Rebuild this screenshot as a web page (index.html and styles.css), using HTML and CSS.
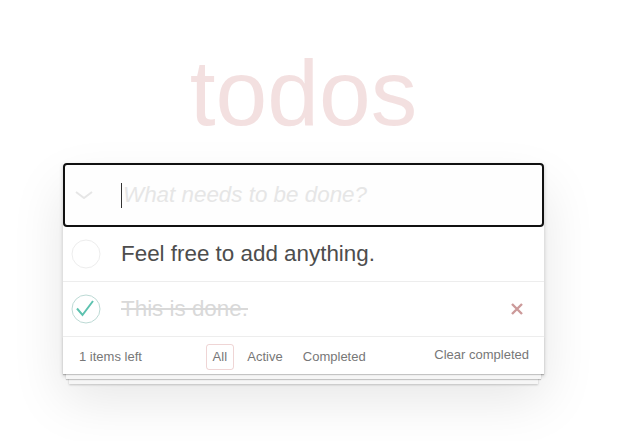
FILE: index.html
```html
<!DOCTYPE html>
<html>
<head>
<meta charset="utf-8">
<link rel="stylesheet" href="styles.css">
</head>
<body>
<section class="app">
  <h1 class="title">todos</h1>
  <div class="card">
    <div class="new-todo">
      <span class="toggle-all">
        <svg width="18" height="8" viewBox="0 0 18 8"><polyline points="1,1 9,7 17,1" fill="none" stroke="#e6e6e6" stroke-width="2"/></svg>
      </span>
      <span class="caret"></span>
      <span class="placeholder">What needs to be done?</span>
    </div>
    <ul class="list">
      <li class="item">
        <span class="toggle">
          <svg width="30" height="30" viewBox="0 0 30 30"><circle cx="15" cy="15" r="14" fill="none" stroke="#ededed" stroke-width="1"/></svg>
        </span>
        <span class="label">Feel free to add anything.</span>
      </li>
      <li class="item done">
        <span class="toggle">
          <svg width="30" height="30" viewBox="0 0 30 30"><circle cx="15" cy="15" r="14" fill="none" stroke="#bddad5" stroke-width="1"/><polyline points="6,14.5 11.5,21 22,7" fill="none" stroke="#5dc2af" stroke-width="2"/></svg>
        </span>
        <span class="label">This is done.</span>
        <span class="destroy">
          <svg width="12" height="12" viewBox="0 0 12 12"><path d="M1 1L11 11M11 1L1 11" stroke="#cc9a9a" stroke-width="2.4"/></svg>
        </span>
      </li>
    </ul>
    <footer class="footer">
      <span class="count"><strong>1</strong> items left</span>
      <ul class="filters">
        <li><a class="selected">All</a></li>
        <li><a>Active</a></li>
        <li><a>Completed</a></li>
      </ul>
      <span class="clear">Clear completed</span>
    </footer>
  </div>
</section>
</body>
</html>
```
FILE: styles.css
```css
* { box-sizing: border-box; }
html, body { margin: 0; padding: 0; }
body {
  background: #fff;
  font-family: "Liberation Sans", Arial, sans-serif;
  color: #4d4d4d;
  min-height: 441px;
}
ul { list-style: none; margin: 0; padding: 0; }
.app {
  width: 481px;
  margin-left: 63px;
  padding-bottom: 67px;
}
.title {
  margin: 47px 0 0;
  font-size: 93px;
  line-height: 93px;
  height: 93px;
  font-weight: normal;
  text-align: center;
  color: rgba(175, 47, 47, 0.15);
}
.card {
  margin-top: 23px;
  position: relative;
  isolation: isolate;
  background: #fff;
  box-shadow: 0 2px 4px 0 rgba(0,0,0,0.2), 0 25px 50px 0 rgba(0,0,0,0.1);
}
.new-todo {
  height: 64px;
  border: 2px solid #111;
  border-radius: 4px;
  background: #fefefe;
  display: flex;
  align-items: center;
}
.toggle-all {
  width: 56px;
  padding-left: 10px;
  display: flex;
  align-items: center;
}
.toggle-all svg { display: block; }
.caret {
  width: 1px;
  height: 25px;
  background: #333;
}
.placeholder {
  margin-left: 1px;
  font-size: 22.4px;
  font-style: italic;
  color: #e6e6e6;
}
.item {
  height: 55px;
  border-bottom: 1px solid #ededed;
  display: flex;
  align-items: center;
  font-size: 22.4px;
  background: #fff;
}
.toggle {
  width: 58px;
  padding-left: 8px;
  display: flex;
  align-items: center;
}
.toggle svg { display: block; }
.label { color: #4d4d4d; }
.done .label {
  color: #d9d9d9;
  text-decoration: line-through;
}
.destroy {
  margin-left: auto;
  margin-right: 21px;
  display: flex;
}
.footer {
  position: relative;
  height: 37px;
  display: flex;
  align-items: center;
  padding: 0 15px 0 16px;
  font-size: 13px;
  color: #777;
}
.footer::before {
  content: "";
  position: absolute;
  left: 0; right: 0; bottom: 0;
  height: 37px;
  z-index: -1;
  box-shadow: 0 1px 1px rgba(0,0,0,0.2),
              0 8px 0 -3px #f6f6f6,
              0 9px 1px -3px rgba(0,0,0,0.2),
              0 16px 0 -6px #f6f6f6,
              0 17px 2px -6px rgba(0,0,0,0.2);
}
.count { width: 127px; padding-top: 2px; }
.count strong { font-weight: normal; }
.filters { display: flex; gap: 7px; padding-top: 2px; }
.filters a {
  display: block;
  height: 26px;
  line-height: 24px;
  padding: 0 5.6px;
  border: 1px solid transparent;
  border-radius: 3px;
  color: #777;
}
.filters a.selected { border-color: rgba(175, 47, 47, 0.2); }
.clear { margin-left: auto; padding-bottom: 2px; }
```
